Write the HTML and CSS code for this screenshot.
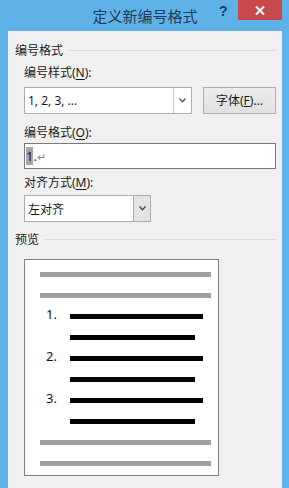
FILE: index.html
```html
<!DOCTYPE html>
<html lang="zh-CN">
<head>
<meta charset="utf-8">
<title>定义新编号格式</title>
<link rel="stylesheet" href="styles.css">
</head>
<body>
<div class="window">
  <div class="titlebar">
    <div class="title">定义新编号格式</div>
    <div class="help">?</div>
    <div class="close">
      <svg width="10" height="9" viewBox="0 0 10 9"><path d="M1 0.5 L9 8.5 M9 0.5 L1 8.5" stroke="#fff" stroke-width="2" fill="none"/></svg>
    </div>
  </div>
  <div class="content">
    <div class="group-head"><span>编号格式</span><i class="rule"></i></div>
    <div class="label l1">编号样式(<u>N</u>):</div>
    <div class="row">
      <div class="combo wide">
        <span class="combo-text">1, 2, 3, ...</span>
        <span class="drop"><svg width="7" height="5" viewBox="0 0 7 5"><path d="M0.5 0.5 L3.5 3.8 L6.5 0.5" stroke="#555" stroke-width="1.3" fill="none"/></svg></span>
      </div>
      <div class="button">字体(<u>F</u>)...</div>
    </div>
    <div class="label l2">编号格式(<u>O</u>):</div>
    <div class="input"><span class="sel">1</span>.<span class="para">↵</span></div>
    <div class="label l3">对齐方式(<u>M</u>):</div>
    <div class="combo narrow">
      <span class="combo-text cjk">左对齐</span>
      <span class="drop hot"><svg width="7" height="5" viewBox="0 0 7 5"><path d="M0.5 0.5 L3.5 3.8 L6.5 0.5" stroke="#444" stroke-width="1.3" fill="none"/></svg></span>
    </div>
    <div class="group-head g2"><span>预览</span><i class="rule"></i></div>
    <div class="preview">
      <div class="gline"></div>
      <div class="gline"></div>
      <div class="item">
        <span class="num">1.</span>
        <div class="blines"><div class="bline long"></div><div class="bline short"></div></div>
      </div>
      <div class="item">
        <span class="num">2.</span>
        <div class="blines"><div class="bline long"></div><div class="bline short"></div></div>
      </div>
      <div class="item">
        <span class="num">3.</span>
        <div class="blines"><div class="bline long"></div><div class="bline short"></div></div>
      </div>
      <div class="gline"></div>
      <div class="gline last"></div>
    </div>
  </div>
</div>
</body>
</html>
```

FILE: styles.css
```css
* { box-sizing: border-box; }
html, body { margin: 0; padding: 0; }
body {
  width: 289px;
  height: 488px;
  overflow: hidden;
  background: #5fb2e8;
  font-family: "Noto Sans", "Noto Sans CJK SC", sans-serif;
  font-size: 12px;
  color: #1a1a1a;
}
.window {
  width: 289px;
  height: 488px;
  display: flex;
  flex-direction: column;
}
.titlebar {
  height: 31px;
  position: relative;
  display: flex;
  justify-content: center;
}
.title {
  font-family: "Noto Sans CJK SC", sans-serif;
  font-size: 15px;
  line-height: 20px;
  padding-top: 6px;
  color: #243a55;
  margin-left: 1px;
}
.help {
  position: absolute;
  left: 219px;
  top: 3px;
  font-family: "Liberation Sans", sans-serif;
  font-weight: bold;
  font-size: 14px;
  line-height: 16px;
  color: #1d3a63;
}
.close {
  position: absolute;
  left: 238px;
  top: 0;
  width: 44px;
  height: 20px;
  background: #c9494d;
  display: flex;
  align-items: center;
  justify-content: center;
}
.content {
  flex: 1;
  margin: 0 7px 0 8px;
  background: #f0f0f0;
  padding: 11px 6px 0 7px;
}
.group-head {
  display: flex;
  align-items: center;
  height: 16px;
  line-height: 16px;
  font-family: "Noto Sans CJK SC", sans-serif;
}
.group-head .rule {
  flex: 1;
  height: 1px;
  background: #d9dde2;
  margin-left: 6px;
  margin-top: 1px;
}
.g2 { margin-top: 9px; }
.label {
  margin-left: 9px;
  height: 16px;
  line-height: 16px;
}
.label u { text-decoration-thickness: 1px; text-underline-offset: 2px; }
.l1 { margin-top: 7px; }
.l2 { margin-top: 11px; }
.l3 { margin-top: 6px; }
.row {
  display: flex;
  margin-left: 9px;
  margin-top: 6px;
  gap: 11px;
}
.combo {
  height: 27px;
  background: #fff;
  border: 1px solid #abadb3;
  display: flex;
  align-items: stretch;
}
.combo.wide { width: 168px; }
.combo.narrow { width: 127px; margin-left: 9px; margin-top: 4px; }
.combo-text {
  flex: 1;
  padding-left: 3px;
  line-height: 25px;
}
.combo-text.cjk { font-family: "Noto Sans CJK SC", sans-serif; }
.drop {
  width: 18px;
  border-left: 1px solid #c8c8c8;
  display: flex;
  align-items: center;
  justify-content: center;
}
.drop.hot {
  width: 17px;
  background: #e3e3e3;
  border-left: 1px solid #a9a9a9;
}
.button {
  width: 73px;
  height: 27px;
  background: linear-gradient(#ececec, #e0e0e0);
  border: 1px solid #adadad;
  text-align: center;
  line-height: 25px;
}
.input {
  margin-left: 9px;
  margin-top: 2px;
  width: 252px;
  height: 26px;
  background: #fff;
  border: 1px solid #7a7a7a;
  padding-left: 1px;
  line-height: 24px;
  font-size: 13px;
}
.sel {
  background: #a6a6a6;
  color: #1a1a1a;
}
.para { color: #8a8a8a; font-size: 11px; }
.preview {
  margin-left: 9px;
  margin-top: 12px;
  width: 195px;
  background: #fff;
  border: 1px solid #7f7f7f;
  padding: 12px 7px 9px 15px;
}
.gline {
  height: 5px;
  background: #a0a0a0;
  margin-bottom: 16px;
}
.gline.last { margin-bottom: 0; }
.item {
  display: flex;
  align-items: flex-start;
}
.num {
  width: 30px;
  padding-left: 6px;
  font-size: 13px;
  line-height: 13px;
  margin-top: -6px;
  color: #111;
}
.blines { flex: 1; }
.bline {
  height: 5px;
  background: #000;
  margin-bottom: 16px;
}
.bline.long { width: 133px; }
.bline.short { width: 125px; }
```
